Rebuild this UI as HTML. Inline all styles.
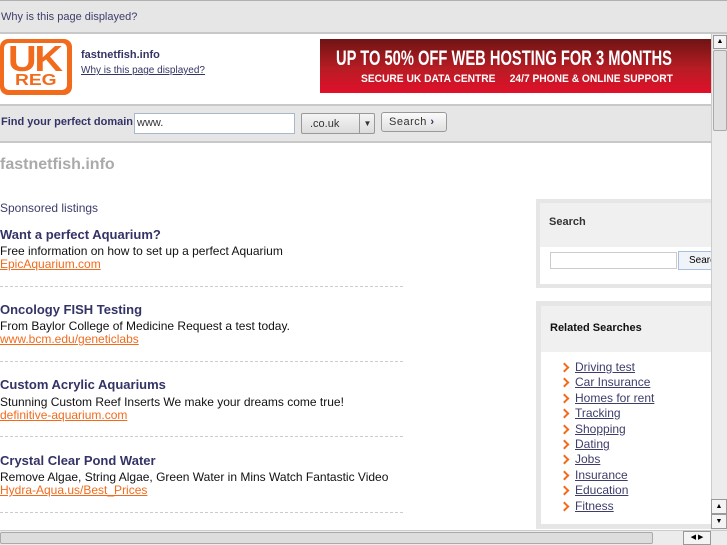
<!DOCTYPE html>
<html><head><style>
*{margin:0;padding:0;box-sizing:border-box}
body{width:727px;height:545px;overflow:hidden;font-family:"Liberation Sans",sans-serif;background:#fff;position:relative}
.a{position:absolute;white-space:nowrap}
.top{left:0;top:0;width:727px;height:34px;background:#e6e6e6;border-top:1px solid #b0b0b0;border-bottom:2px solid #c8c8c8}
.top span{position:absolute;left:1px;top:10px;font-size:11px;color:#3d3d6b}
.sb{left:0;top:104px;width:711px;height:39px;background:#e6e6e6;border-top:2px solid #c8c8c8;border-bottom:2px solid #c8c8c8}
.t{font-weight:bold;font-size:13px;color:#333366;position:absolute;left:0}
.d{font-size:12px;color:#111;position:absolute;left:0}
.u{font-size:12px;color:#f26b1d;text-decoration:underline;position:absolute;left:0}
.sep{position:absolute;left:0;width:403px;border-top:1px dashed #ccc}
.rel a{display:block;font-size:12px;color:#3d3d6b;text-decoration:underline;height:15.4px;position:relative;padding-left:34px}
.rel a:before{content:"";position:absolute;left:20px;top:4px;width:5px;height:5px;border-right:2px solid #f26b1d;border-top:2px solid #f26b1d;transform:rotate(45deg)}
</style></head><body>
<div class="a top"><span>Why is this page displayed?</span></div>
<div class="a" style="left:0;top:39px;width:72px;height:56px;background:#f26b1d;border-radius:8px"></div>
<div class="a" style="left:4px;top:43px;width:63px;height:47px;background:#fff;border-radius:5px"></div>
<div class="a" style="left:8px;top:38px;font-size:36px;font-weight:bold;color:#f26b1d;letter-spacing:-2px;transform:scaleX(1.1);transform-origin:left">UK</div>
<div class="a" style="left:15px;top:72px;font-size:16px;font-weight:bold;color:#f26b1d;transform:scaleX(1.2);transform-origin:left">REG</div>
<div class="a" style="left:81px;top:49px;font-size:11px;font-weight:bold;color:#333366">fastnetfish.info</div>
<div class="a" style="left:81px;top:65px;font-size:10px;color:#333366;text-decoration:underline">Why is this page displayed?</div>
<div class="a" style="left:320px;top:39px;width:392px;height:54px;background:linear-gradient(#6e1414,#b81c24 55%,#e0102a);color:#fff;font-weight:bold;overflow:hidden">
<div class="a" style="left:16px;top:8px;font-size:21px;transform:scaleX(0.7);transform-origin:left">UP TO 50% OFF WEB HOSTING FOR 3 MONTHS</div>
<div class="a" style="left:41px;top:34px;font-size:11px;transform:scaleX(0.93);transform-origin:left">SECURE UK DATA CENTRE &nbsp;&nbsp;&nbsp; 24/7 PHONE &amp; ONLINE SUPPORT</div>
</div>
<div class="a sb">
<span class="a" style="left:1px;top:10px;font-size:11px;font-weight:bold;color:#333366">Find your perfect domain</span>
<div class="a" style="left:134px;top:7px;width:161px;height:21px;background:#fff;border:1px solid #a8b8c8;font-size:11px;padding:3px 2px;color:#333">www.</div>
<div class="a" style="left:301px;top:7px;width:74px;height:21px;background:linear-gradient(#f4f4f4,#dcdcdc);border:1px solid #999;border-radius:2px;font-size:11px;padding:4px 8px;color:#333">.co.uk<span class="a" style="left:57px;top:0;height:19px;border-left:1px solid #999;width:16px;font-size:8px;text-align:center;padding-top:5px">▼</span></div>
<div class="a" style="left:381px;top:6px;width:66px;height:20px;background:linear-gradient(#fafafa,#e0e0e0);border:1px solid #999;border-radius:3px;font-size:11px;padding:3px 7px;color:#333;letter-spacing:0.5px">Search <b style="color:#333366">›</b></div>
</div>
<div class="a" style="left:0;top:156px;font-size:16px;font-weight:bold;color:#aaa">fastnetfish.info</div>
<div class="a" style="left:0;top:201px;font-size:12px;color:#3d3d6b">Sponsored listings</div>
<div class="t" style="top:227px">Want a perfect Aquarium?</div>
<div class="d" style="top:244px">Free information on how to set up a perfect Aquarium</div>
<div class="u" style="top:257px">EpicAquarium.com</div>
<div class="sep" style="top:286px"></div>
<div class="t" style="top:302px">Oncology FISH Testing</div>
<div class="d" style="top:319px">From Baylor College of Medicine Request a test today.</div>
<div class="u" style="top:332px">www.bcm.edu/geneticlabs</div>
<div class="sep" style="top:361px"></div>
<div class="t" style="top:377px">Custom Acrylic Aquariums</div>
<div class="d" style="top:395px">Stunning Custom Reef Inserts We make your dreams come true!</div>
<div class="u" style="top:408px">definitive-aquarium.com</div>
<div class="sep" style="top:436px"></div>
<div class="t" style="top:453px">Crystal Clear Pond Water</div>
<div class="d" style="top:470px">Remove Algae, String Algae, Green Water in Mins Watch Fantastic Video</div>
<div class="u" style="top:483px">Hydra-Aqua.us/Best_Prices</div>
<div class="sep" style="top:512px"></div>
<div class="a" style="left:536px;top:199px;width:176px;height:89px;background:#e6e6e6;padding:4px 0 4px 4px">
<div style="background:#f0f0f0;height:44px;font-size:11px;font-weight:bold;color:#333;padding:13px 9px">Search</div>
<div style="background:#fff;height:37px;position:relative">
<div class="a" style="left:10px;top:5px;width:127px;height:17px;border:1px solid #ccc"></div>
<div class="a" style="left:138px;top:4px;width:40px;height:19px;border:1px solid #a8c0e0;background:#f0f4f8;font-size:10px;padding:3px 0 0 10px;overflow:hidden">Search</div>
</div></div>
<div class="a" style="left:536px;top:301px;width:176px;height:228px;background:#e6e6e6;padding:5px 0 5px 5px">
<div style="background:#f0f0f0;height:46px;font-size:11px;font-weight:bold;color:#111;padding:16px 9px">Related Searches</div>
<div class="rel" style="background:#fff;height:172px;padding-top:8px">
<a>Driving test</a><a>Car Insurance</a><a>Homes for rent</a><a>Tracking</a><a>Shopping</a><a>Dating</a><a>Jobs</a><a>Insurance</a><a>Education</a><a>Fitness</a>
</div></div>
<div class="a" style="left:711px;top:34px;width:16px;height:481px;background:#ececec;border-left:1px solid #ccc">
<div class="a" style="left:1px;top:1px;width:14px;height:14px;border:1px solid #999;background:#f4f4f4;font-size:7px;text-align:center;line-height:12px">▲</div>
<div class="a" style="left:1px;top:16px;width:14px;height:81px;border:1px solid #aaa;background:#e0e0e0;border-radius:2px"></div>
</div>
<div class="a" style="left:711px;top:499px;width:16px;height:31px;background:#ececec">
<div style="border:1px solid #999;height:15px;font-size:7px;text-align:center;line-height:13px;background:#f4f4f4">▲</div>
<div style="border:1px solid #999;height:15px;font-size:7px;text-align:center;line-height:13px;background:#f4f4f4">▼</div></div>
<div class="a" style="left:0;top:530px;width:727px;height:15px;background:#ececec;border-top:1px solid #ccc">
<div class="a" style="left:0;top:1px;width:653px;height:12px;background:#ddd;border:1px solid #aaa;border-radius:2px"></div>
<div class="a" style="left:683px;top:0;width:28px;height:14px;border:1px solid #999;background:#f4f4f4;font-size:7px;line-height:12px;text-align:center">◀ ▶</div>
</div>
</body></html>
